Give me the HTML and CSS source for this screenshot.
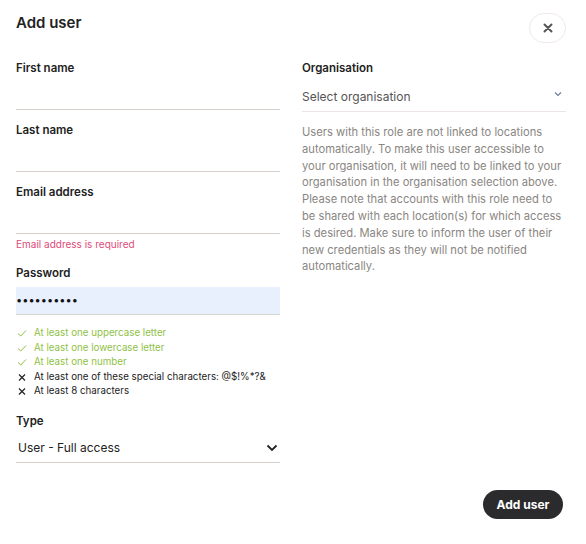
FILE: index.html
```html
<!DOCTYPE html>
<html>
<head>
<meta charset="utf-8">
<link rel="stylesheet" href="styles.css">
</head>
<body>
<div class="dialog">
  <div class="header">
    <h1 class="title">Add user</h1>
    <button class="close" aria-label="Close">
      <svg width="10" height="10" viewBox="0 0 10 10"><path d="M1.5 1.5 L8.5 8.5 M8.5 1.5 L1.5 8.5" stroke="#555" stroke-width="2" stroke-linecap="round"/></svg>
    </button>
  </div>
  <div class="columns">
    <div class="col">
      <div class="field">
        <div class="label">First name</div>
        <div class="input"></div>
      </div>
      <div class="field">
        <div class="label">Last name</div>
        <div class="input"></div>
      </div>
      <div class="field field-error">
        <div class="label">Email address</div>
        <div class="input"></div>
        <div class="error">Email address is required</div>
      </div>
      <div class="field field-pw">
        <div class="label">Password</div>
        <div class="input input-pw">••••••••••</div>
      </div>
      <ul class="rules">
        <li class="ok"><svg class="ico" width="10" height="10" viewBox="0 0 10 10"><path d="M1 5.5 L3.8 8 L9 2.5" fill="none" stroke="#8fbf45" stroke-width="1"/></svg>At least one uppercase letter</li>
        <li class="ok"><svg class="ico" width="10" height="10" viewBox="0 0 10 10"><path d="M1 5.5 L3.8 8 L9 2.5" fill="none" stroke="#8fbf45" stroke-width="1"/></svg>At least one lowercase letter</li>
        <li class="ok"><svg class="ico" width="10" height="10" viewBox="0 0 10 10"><path d="M1 5.5 L3.8 8 L9 2.5" fill="none" stroke="#8fbf45" stroke-width="1"/></svg>At least one number</li>
        <li class="bad"><svg class="ico" width="10" height="10" viewBox="0 0 10 10"><path d="M2 2.5 L8 8.5 M8 2.5 L2 8.5" fill="none" stroke="#222" stroke-width="1.2"/></svg>At least one of these special characters: @$!%*?&amp;</li>
        <li class="bad"><svg class="ico" width="10" height="10" viewBox="0 0 10 10"><path d="M2 2.5 L8 8.5 M8 2.5 L2 8.5" fill="none" stroke="#222" stroke-width="1.2"/></svg>At least 8 characters</li>
      </ul>
      <div class="field field-last">
        <div class="label">Type</div>
        <div class="input select">
          <span class="select-text">User - Full access</span>
          <svg width="12" height="8" viewBox="0 0 12 8"><path d="M1.5 1.5 L6 6 L10.5 1.5" fill="none" stroke="#222" stroke-width="1.8"/></svg>
        </div>
      </div>
    </div>
    <div class="col">
      <div class="field">
        <div class="label">Organisation</div>
        <div class="input select org">
          <span class="org-text">Select organisation</span>
          <svg class="org-chev" width="8" height="6" viewBox="0 0 8 6"><path d="M1 1.5 L4 4.5 L7 1.5" fill="none" stroke="#6a7a98" stroke-width="1.1"/></svg>
        </div>
      </div>
      <p class="note">Users with this role are not linked to locations automatically. To make this user accessible to your organisation, it will need to be linked to your organisation in the organisation selection above. Please note that accounts with this role need to be shared with each location(s) for which access is desired. Make sure to inform the user of their new credentials as they will not be notified automatically.</p>
    </div>
  </div>
  <div class="footer">
    <button class="submit">Add user</button>
  </div>
</div>
</body>
</html>
```

FILE: styles.css
```css
* { box-sizing: border-box; }
html, body { margin: 0; padding: 0; background: #fff; }
body {
  font-family: Inter, "Noto Sans", "Liberation Sans", sans-serif;
  color: #222;
  width: 586px;
  height: 544px;
}
.dialog {
  padding: 13px 20px 0 16px;
}
.header {
  display: flex;
  justify-content: space-between;
  align-items: flex-start;
  height: 47px;
}
.title {
  margin: 0;
  font-size: 15px;
  line-height: 20px;
  font-weight: 600;
  color: #222;
}
.close {
  width: 37px;
  height: 30px;
  margin-top: 0;
  border: 1px solid #f1e8e8;
  border-radius: 15px;
  background: #fff;
  display: flex;
  align-items: center;
  justify-content: center;
  padding: 0;
}
.columns {
  display: grid;
  grid-template-columns: 264px 264px;
  column-gap: 22px;
}
.field { margin-bottom: 12px; }
.field-last { margin-bottom: 0; }
.label {
  font-size: 11.5px;
  line-height: 16px;
  font-weight: 600;
  color: #222;
}
.input {
  margin-top: 6px;
  height: 28px;
  border-bottom: 1px solid #d6ceca;
}
.field-error { margin-bottom: 15px; }
.error {
  margin-top: 4px;
  font-size: 10px;
  line-height: 12px;
  color: #dd4a78;
}
.field-pw { margin-bottom: 0; }
.input-pw {
  background: #e8f0fe;
  height: 28px;
  font-size: 11px;
  line-height: 27px;
  color: #111;
  border-bottom-color: #d6d2d0;
}
.rules {
  list-style: none;
  margin: 11px 0 14px;
  padding: 0;
}
.rules li {
  display: flex;
  align-items: center;
  font-size: 9.75px;
  line-height: 14.5px;
  height: 14.5px;
  white-space: nowrap;
}
.rules .ico { margin: 0 7px 0 1px; flex: none; }
.rules .ok { color: #8fbf45; }
.rules .bad { color: #222; }
.select {
  display: flex;
  align-items: center;
  justify-content: space-between;
  padding: 0 2px 1px 2px;
}
.select-text { font-size: 12px; color: #222; }
.org {
  height: 30px;
  padding: 0 4px 0 0;
  border-bottom-color: #efe4e4;
}
.org-text { font-size: 12px; color: #555; }
.org-chev { margin-top: -6px; }
.note {
  margin: 12px 0 0;
  font-size: 11.2px;
  line-height: 16.8px;
  color: #8a8682;
}
.footer {
  display: flex;
  justify-content: flex-end;
  margin-top: 27px;
  padding-right: 3px;
}
.submit {
  height: 29px;
  width: 80px;
  border: none;
  border-radius: 15px;
  background: #2b2b2e;
  color: #fff;
  font-family: inherit;
  font-size: 12px;
  font-weight: 700;
  padding: 0;
}
```
